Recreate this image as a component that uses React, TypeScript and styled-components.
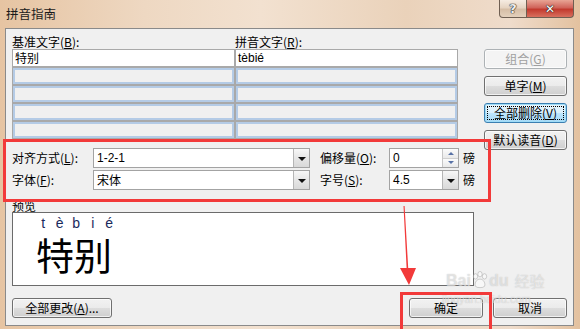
import * as React from "react";
import styled, { createGlobalStyle, css } from "styled-components";

const GlobalStyle = createGlobalStyle`
  html, body {
    margin: 0;
    padding: 0;
  }
  body {
    font-family: "Noto Sans CJK SC", "Liberation Sans", sans-serif;
    font-size: 12px;
    color: #000;
  }
  #root {
    width: 580px;
    height: 329px;
    overflow: hidden;
  }
`;

const Window = styled.div`
  position: relative;
  width: 580px;
  height: 329px;
  display: flex;
  flex-direction: column;
  overflow: hidden;
  background: linear-gradient(
    90deg,
    #e6c4a2 0%,
    #eed8c2 25%,
    #f2e1d0 45%,
    #ead2ba 70%,
    #efdccb 88%,
    #e3c19f 100%
  );
`;

const TitleBar = styled.div`
  height: 28px;
  flex-shrink: 0;
  display: flex;
  align-items: flex-start;
  padding-left: 6px;
`;

const Title = styled.div`
  flex: 1;
  margin-top: 6px;
  font-size: 12.5px;
  line-height: 16px;
  color: #1b1b1b;
`;

const CaptionButtons = styled.div`
  display: flex;
  margin-right: 6px;
`;

const CaptionButton = styled.div<{ $close?: boolean }>`
  height: 18px;
  box-sizing: border-box;
  display: flex;
  align-items: center;
  justify-content: center;
  border: 1px solid #6f5f52;
  border-top: none;
  font-family: "DejaVu Sans", sans-serif;
  font-weight: bold;
  color: #fff;
  text-shadow: 0 0 1px #222, 0 0 1px #222, 0 0 1px #222;
  ${(p) =>
    p.$close
      ? css`
          width: 47px;
          border-left: none;
          border-bottom-right-radius: 4px;
          font-size: 12px;
          background: linear-gradient(#e8a595 0%, #d0645a 45%, #c23a2e 55%, #d8705e 100%);
        `
      : css`
          width: 28px;
          border-bottom-left-radius: 4px;
          font-size: 13px;
          color: #eee;
          background: linear-gradient(#f6ece2 0%, #e6d4c2 45%, #d6bea6 55%, #e4d0bc 100%);
        `}
`;

const Client = styled.div`
  flex: 1;
  margin: 0 6px 3px 5px;
  border: 1px solid #8a8a8a;
  background: #f0f0f0;
  padding: 5px 6px 7px 6px;
  display: flex;
  flex-direction: column;
`;

const Body = styled.div`
  display: flex;
  gap: 10px;
`;

const Main = styled.div`
  width: 462px;
  display: flex;
  flex-direction: column;
`;

const Side = styled.div`
  width: 83px;
  padding-top: 15px;
  display: flex;
  flex-direction: column;
  gap: 7px;
`;

const Key = styled.span`
  text-decoration: underline;
`;

const ColHeaders = styled.div`
  display: grid;
  grid-template-columns: 223px 1fr;
  height: 15px;
  line-height: 15px;
`;

const Table = styled.div`
  width: 446px;
  box-sizing: border-box;
  display: grid;
  grid-template-columns: 221px 221px;
  grid-auto-rows: 16px;
  gap: 2px;
  padding: 1px;
  background: #a9a9a9;
`;

const Cell = styled.div<{ $filled?: boolean; $latin?: boolean }>`
  box-sizing: border-box;
  padding-left: 2px;
  line-height: 16px;
  white-space: nowrap;
  font-family: ${(p) =>
    p.$latin ? `"Liberation Sans", sans-serif` : `"Noto Sans CJK SC", sans-serif`};
  ${(p) =>
    p.$filled
      ? css`
          background: #fff;
        `
      : css`
          background: #f0f0f0;
          border: 2px solid #b4cbe6;
        `}
`;

const Form = styled.div`
  margin-top: 9px;
  display: grid;
  grid-template-columns: 81px 217px 79px 70px auto;
  grid-auto-rows: 20px;
  row-gap: 2px;
  align-items: center;
`;

const FieldLabel = styled.div<{ $indent?: boolean }>`
  padding-left: ${(p) => (p.$indent ? "10px" : "0")};
  white-space: nowrap;
  line-height: 20px;
`;

const Field = styled.div`
  height: 20px;
  box-sizing: border-box;
  display: flex;
  border: 1px solid #a3a3a3;
  background: #fff;
`;

const FieldValue = styled.div<{ $latin?: boolean }>`
  flex: 1;
  padding-left: 3px;
  line-height: 18px;
  font-family: ${(p) =>
    p.$latin ? `"Liberation Sans", sans-serif` : `"Noto Sans CJK SC", sans-serif`};
`;

const DropButton = styled.div`
  width: 16px;
  box-sizing: border-box;
  border-left: 1px solid #b5b5b5;
  background: linear-gradient(#f7f7f7, #e6e6e6 50%, #d9d9d9);
  display: flex;
  align-items: center;
  justify-content: center;
  &::after {
    content: "";
    border-left: 4px solid transparent;
    border-right: 4px solid transparent;
    border-top: 4px solid #111;
    margin-top: 1px;
  }
`;

const Spin = styled.div`
  width: 15px;
  display: flex;
  flex-direction: column;
  border-left: 1px solid #c6c6c6;
`;

const SpinHalf = styled.div<{ $down?: boolean }>`
  flex: 1;
  display: flex;
  align-items: center;
  justify-content: center;
  background: linear-gradient(#fbfbfb, #e9e9e9);
  border-bottom: ${(p) => (p.$down ? "none" : "1px solid #cfcfcf")};
  &::after {
    content: "";
    border-left: 3px solid transparent;
    border-right: 3px solid transparent;
    ${(p) =>
      p.$down
        ? css`
            border-top: 3px solid #5872a6;
          `
        : css`
            border-bottom: 3px solid #5872a6;
          `}
  }
`;

const Unit = styled.div`
  padding-left: 4px;
  line-height: 20px;
`;

const PreviewLabel = styled.div`
  margin-top: 9px;
  height: 13px;
  line-height: 13px;
`;

const PreviewBox = styled.div`
  width: 462px;
  height: 74px;
  box-sizing: border-box;
  border: 1px solid #6b6b6b;
  background: #fff;
  padding: 3px 0 0 22px;
`;

const PinyinRow = styled.div`
  display: flex;
  height: 18px;
  line-height: 15px;
  font-family: "Liberation Sans", sans-serif;
  font-size: 14px;
  color: #1a2a5c;
`;

const PinyinChar = styled.span`
  width: 16.5px;
  text-align: center;
`;

const Hanzi = styled.div`
  margin-left: 1px;
  font-family: "Noto Sans CJK SC", sans-serif;
  font-size: 38px;
  line-height: 40px;
  color: #000;
`;

const Footer = styled.div`
  margin-top: 12px;
  display: flex;
  align-items: center;
  gap: 10px;
`;

const Spacer = styled.div`
  flex: 1;
`;

const Button = styled.button<{ $width: number; $focused?: boolean }>`
  position: relative;
  width: ${(p) => p.$width}px;
  height: 20px;
  box-sizing: border-box;
  padding: 0;
  font-family: "Noto Sans CJK SC", "Liberation Sans", sans-serif;
  font-size: 12px;
  line-height: 18px;
  color: #000;
  border: 1px solid #707070;
  border-radius: 3px;
  background: linear-gradient(#f2f2f2 0%, #ebebeb 50%, #dddddd 50%, #cfcfcf 100%);
  box-shadow: inset 0 0 0 1px rgba(255, 255, 255, 0.7);
  &:disabled {
    color: #a0a0a0;
    border-color: #adb2b5;
    background: #f4f4f4;
  }
  ${(p) =>
    p.$focused &&
    css`
      border-color: #3c7fb1;
      box-shadow: inset 0 0 0 1px #9fdcf7;
      background: linear-gradient(#eaf6fd 0%, #d9f0fc 50%, #bee6fd 50%, #a7d9f5 100%);
      &::after {
        content: "";
        position: absolute;
        inset: 2px;
        border: 1px dotted #000;
      }
    `}
`;

const RedBox = styled.div<{ $x: number; $y: number; $w: number; $h: number }>`
  position: absolute;
  left: ${(p) => p.$x}px;
  top: ${(p) => p.$y}px;
  width: ${(p) => p.$w}px;
  height: ${(p) => p.$h}px;
  box-sizing: border-box;
  border: 3px solid #f23a3a;
  pointer-events: none;
`;

const Arrow = styled.svg`
  position: absolute;
  left: 396px;
  top: 204px;
  pointer-events: none;
`;

const Watermark = styled.div`
  position: absolute;
  left: 446px;
  top: 270px;
  pointer-events: none;
  color: rgba(255, 255, 255, 0.5);
  text-shadow: 0 0 1px rgba(140, 140, 140, 0.55);
  font-family: "Liberation Sans", sans-serif;
`;

const WatermarkMain = styled.div`
  display: flex;
  align-items: flex-end;
  font-size: 16px;
  font-weight: bold;
  line-height: 18px;
  span:last-child {
    font-family: "Noto Sans CJK SC", sans-serif;
    font-weight: normal;
    font-size: 15px;
    margin-left: 6px;
  }
`;

const WatermarkSub = styled.div`
  font-size: 11px;
  line-height: 12px;
  margin: 3px 0 0 -4px;
`;

const pinyin = ["t", "è", "b", "i", "é"];

export default function App() {
  return (
    <>
      <GlobalStyle />
      <Window>
        <TitleBar>
          <Title>拼音指南</Title>
          <CaptionButtons>
            <CaptionButton>?</CaptionButton>
            <CaptionButton $close>✕</CaptionButton>
          </CaptionButtons>
        </TitleBar>
        <Client>
          <Body>
            <Main>
              <ColHeaders>
                <div>
                  基准文字(<Key>B</Key>):
                </div>
                <div>
                  拼音文字(<Key>R</Key>):
                </div>
              </ColHeaders>
              <Table>
                <Cell $filled>特别</Cell>
                <Cell $filled $latin>
                  tèbié
                </Cell>
                {Array.from({ length: 8 }).map((_, i) => (
                  <Cell key={i} />
                ))}
              </Table>
              <Form>
                <FieldLabel>
                  对齐方式(<Key>L</Key>):
                </FieldLabel>
                <Field>
                  <FieldValue $latin>1-2-1</FieldValue>
                  <DropButton />
                </Field>
                <FieldLabel $indent>
                  偏移量(<Key>O</Key>):
                </FieldLabel>
                <Field>
                  <FieldValue $latin>0</FieldValue>
                  <Spin>
                    <SpinHalf />
                    <SpinHalf $down />
                  </Spin>
                </Field>
                <Unit>磅</Unit>
                <FieldLabel>
                  字体(<Key>F</Key>):
                </FieldLabel>
                <Field>
                  <FieldValue>宋体</FieldValue>
                  <DropButton />
                </Field>
                <FieldLabel $indent>
                  字号(<Key>S</Key>):
                </FieldLabel>
                <Field>
                  <FieldValue $latin>4.5</FieldValue>
                  <DropButton />
                </Field>
                <Unit>磅</Unit>
              </Form>
              <PreviewLabel>预览</PreviewLabel>
              <PreviewBox>
                <PinyinRow>
                  {pinyin.map((c, i) => (
                    <PinyinChar key={i}>{c}</PinyinChar>
                  ))}
                </PinyinRow>
                <Hanzi>特别</Hanzi>
              </PreviewBox>
            </Main>
            <Side>
              <Button $width={83} disabled>
                组合(<Key>G</Key>)
              </Button>
              <Button $width={83}>
                单字(<Key>M</Key>)
              </Button>
              <Button $width={83} $focused>
                全部删除(<Key>V</Key>)
              </Button>
              <Button $width={83}>
                默认读音(<Key>D</Key>)
              </Button>
            </Side>
          </Body>
          <Footer>
            <Button $width={100}>
              全部更改(<Key>A</Key>)...
            </Button>
            <Spacer />
            <Button $width={74}>确定</Button>
            <Button $width={74}>取消</Button>
          </Footer>
        </Client>

        <Watermark>
          <WatermarkMain>
            <span>Bai</span>
            <svg width="18" height="20" viewBox="0 0 20 20">
              <g fill="rgba(255,255,255,0.55)" stroke="rgba(140,140,140,0.55)" strokeWidth="0.8">
                <ellipse cx="5" cy="6" rx="2.4" ry="3" />
                <ellipse cx="10" cy="3.5" rx="2.4" ry="3" />
                <ellipse cx="15" cy="6" rx="2.4" ry="3" />
                <path d="M10 9 C6 9 3.5 14 5 17 C6.5 19 13.5 19 15 17 C16.5 14 14 9 10 9 Z" />
              </g>
            </svg>
            <span>du</span>
            <span>经验</span>
          </WatermarkMain>
          <WatermarkSub>jingyan.baidu.com</WatermarkSub>
        </Watermark>

        <RedBox $x={3} $y={139} $w={488} $h={63} />
        <RedBox $x={400} $y={292} $w={92} $h={42} />
        <Arrow width="24" height="84" viewBox="0 0 24 84">
          <polygon
            points="7.5,2 8.6,2 12.2,64 20,64 13,81 4,64 10.6,64"
            fill="#f23a3a"
          />
        </Arrow>
      </Window>
    </>
  );
}
